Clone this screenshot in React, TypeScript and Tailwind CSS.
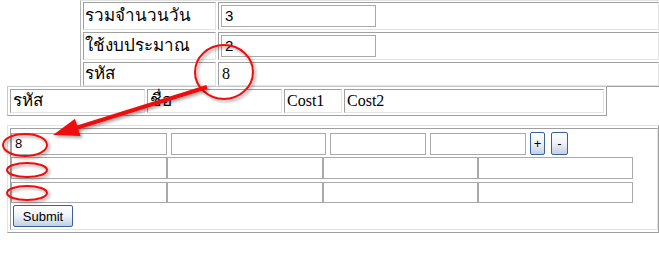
import React from "react";

const cell = "border border-[#a0a0a0] border-r-[#e3e3e3] border-b-[#e3e3e3]";
const inp = "border border-[#a9a9a9] bg-white outline-none";
const btn =
  "rounded-[2px] border border-[#3b6199] bg-gradient-to-b from-white via-[#eef2f8] to-[#c2cfe2] font-['Liberation_Sans'] text-[13px] leading-none text-black";
const thai = "text-[17px]";

function Annotations() {
  return (
    <svg className="pointer-events-none absolute left-0 top-0" width="659" height="257">
      <defs>
        <filter id="sh" x="-20%" y="-20%" width="140%" height="140%">
          <feDropShadow dx="2" dy="2" stdDeviation="1.5" floodColor="#000" floodOpacity="0.35" />
        </filter>
      </defs>
      <g filter="url(#sh)" fill="none" stroke="#ee1111" strokeWidth="2">
        <ellipse cx="224" cy="72" rx="29" ry="27" />
        <ellipse cx="25" cy="145" rx="22" ry="11" />
        <ellipse cx="27" cy="170" rx="20" ry="7" />
        <ellipse cx="27" cy="193" rx="20" ry="7" />
      </g>
      <g filter="url(#sh)">
        <line x1="207" y1="87" x2="76" y2="128" stroke="#ee1111" strokeWidth="4" />
        <polygon points="53,135 75,118.7 80.5,136" fill="#ee1111" />
      </g>
    </svg>
  );
}

export default function App() {
  return (
    <div className="relative h-[257px] w-[659px] overflow-hidden bg-white font-['Liberation_Serif','DejaVu_Sans',serif] text-[16px] text-black">
      {/* totals */}
      <div className="ml-[80px] flex flex-col gap-[2px] border-l border-t border-[#b4b4b4] border-t-[#e3e3e3] pl-[2px] pt-[1px]">
        <div className="flex h-[28px] gap-[2px]">
          <div className={`${cell} ${thai} flex w-[133px] items-center pl-[1px]`}>รวมจำนวนวัน</div>
          <div className={`${cell} flex flex-1 items-center p-[2px]`}>
            <input className={`${inp} h-[22px] w-[155px] px-[3px] font-['Liberation_Sans'] text-[15px]`} defaultValue="3" />
          </div>
        </div>
        <div className="flex h-[28px] gap-[2px]">
          <div className={`${cell} ${thai} flex w-[133px] items-center pl-[1px]`}>ใช้งบประมาณ</div>
          <div className={`${cell} flex flex-1 items-center p-[2px]`}>
            <input className={`${inp} h-[22px] w-[155px] px-[3px] font-['Liberation_Sans'] text-[15px]`} defaultValue="2" />
          </div>
        </div>
        <div className="flex h-[24px] gap-[2px]">
          <div className={`${cell} ${thai} flex w-[133px] items-center pl-[1px]`}>รหัส</div>
          <div className={`${cell} flex flex-1 items-center pl-[3px]`}>8</div>
        </div>
      </div>

      {/* header */}
      <div className="flex">
        <div className="ml-[7px] flex gap-[2px] border border-[#c8c8c8] border-b-[#a0a0a0] border-r-[#a0a0a0] p-[2px]">
          <div className={`${cell} ${thai} flex h-[24px] w-[135px] items-center pl-[2px]`}>รหัส</div>
          <div className={`${cell} ${thai} flex h-[24px] w-[135px] items-center pl-[2px]`}>ชื่อ</div>
          <div className={`${cell} flex h-[24px] w-[58px] items-center pl-[2px]`}>Cost1</div>
          <div className={`${cell} flex h-[24px] w-[260px] items-center pl-[2px]`}>Cost2</div>
        </div>
        <div className="flex-1 border-t border-[#a0a0a0]" />
      </div>

      {/* rows */}
      <div className="ml-[7px] mt-[9px] border border-[#e3e3e3] border-b-[#a0a0a0] border-r-[#a0a0a0] pb-[2px] pl-[2px] pt-[2px]">
        <div className={`${cell} flex flex-col pb-[2px] pt-[3px]`}>
          <div className="flex items-center gap-[4px]">
            <input className={`${inp} h-[22px] w-[156px] px-[3px] font-['Liberation_Sans'] text-[13px]`} defaultValue="8" />
            <input className={`${inp} h-[22px] w-[155px]`} />
            <input className={`${inp} h-[22px] w-[96px]`} />
            <input className={`${inp} h-[22px] w-[96px]`} />
            <button className={`${btn} h-[23px] w-[15px]`}>+</button>
            <button className={`${btn} ml-[2px] h-[23px] w-[17px]`}>-</button>
          </div>
          <div className="mt-[2px] flex">
            <input className={`${inp} h-[22px] w-[156px]`} />
            <input className={`${inp} h-[22px] w-[156px]`} />
            <input className={`${inp} h-[22px] w-[155px]`} />
            <input className={`${inp} h-[22px] w-[155px]`} />
          </div>
          <div className="mt-[3px] flex">
            <input className={`${inp} h-[21px] w-[156px]`} />
            <input className={`${inp} h-[21px] w-[156px]`} />
            <input className={`${inp} h-[21px] w-[155px]`} />
            <input className={`${inp} h-[21px] w-[155px]`} />
          </div>
          <div className="mt-[2px] flex">
            <button className={`${btn} ml-[2px] h-[22px] w-[60px]`}>Submit</button>
          </div>
        </div>
      </div>

      <Annotations />
    </div>
  );
}
